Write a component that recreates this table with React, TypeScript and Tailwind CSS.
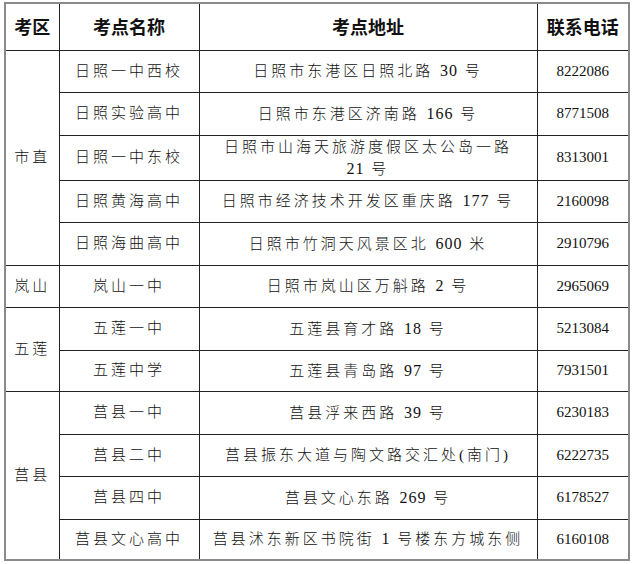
type Row = {
  area?: { name: string; span: number };
  school: string;
  address: string[];
  phone: string;
};

const rows: Row[] = [
  { area: { name: "市直", span: 5 }, school: "日照一中西校", address: ["日照市东港区日照北路 30 号"], phone: "8222086" },
  { school: "日照实验高中", address: ["日照市东港区济南路 166 号"], phone: "8771508" },
  { school: "日照一中东校", address: ["日照市山海天旅游度假区太公岛一路", "21 号"], phone: "8313001" },
  { school: "日照黄海高中", address: ["日照市经济技术开发区重庆路 177 号"], phone: "2160098" },
  { school: "日照海曲高中", address: ["日照市竹洞天风景区北 600 米"], phone: "2910796" },
  { area: { name: "岚山", span: 1 }, school: "岚山一中", address: ["日照市岚山区万斛路 2 号"], phone: "2965069" },
  { area: { name: "五莲", span: 2 }, school: "五莲一中", address: ["五莲县育才路 18 号"], phone: "5213084" },
  { school: "五莲中学", address: ["五莲县青岛路 97 号"], phone: "7931501" },
  { area: { name: "莒县", span: 4 }, school: "莒县一中", address: ["莒县浮来西路 39 号"], phone: "6230183" },
  { school: "莒县二中", address: ["莒县振东大道与陶文路交汇处(南门)"], phone: "6222735" },
  { school: "莒县四中", address: ["莒县文心东路 269 号"], phone: "6178527" },
  { school: "莒县文心高中", address: ["莒县沭东新区书院街 1 号楼东方城东侧"], phone: "6160108" },
];

// row heights read off the screenshot
const heights = [
  "h-[42px]",
  "h-[43px]",
  "h-[44px]",
  "h-[42px]",
  "h-[43px]",
  "h-[42px]",
  "h-[43px]",
  "h-[41px]",
  "h-[43px]",
  "h-[42px]",
  "h-[43px]",
  "h-[41px]",
];

const cell = "border border-[#222] text-center align-middle p-0";
const body = "font-['Liberation_Serif','Noto_Sans_CJK_SC',serif] font-light text-[15px] tracking-[3px] text-[#111]";

// digits in the addresses sit closer together than the Chinese characters
function Line({ text }: { text: string }) {
  return (
    <>
      {text.split(/(\d+)/).map((part, i) =>
        /^\d+$/.test(part) ? (
          <span key={i} className="text-[16px] font-normal tracking-[1px]">
            {part}
          </span>
        ) : (
          <span key={i}>{part}</span>
        ),
      )}
    </>
  );
}

export default function App() {
  return (
    <div className="min-h-[564px] w-[633px] bg-white pl-[4px] pt-[2px]">
      <table className="w-[624px] table-fixed border-collapse border-2 border-[#8a8a8a]">
        <colgroup>
          <col className="w-[54px]" />
          <col className="w-[140px]" />
          <col className="w-[338px]" />
          <col className="w-[92px]" />
        </colgroup>
        <thead>
          <tr className="h-[47px] font-['Noto_Sans_CJK_SC',sans-serif] text-[18px] font-bold text-[#111]">
            <th className={cell}>考区</th>
            <th className={cell}>考点名称</th>
            <th className={cell}>考点地址</th>
            <th className={cell}>联系电话</th>
          </tr>
        </thead>
        <tbody>
          {rows.map((row, i) => (
            <tr key={row.school} className={heights[i]}>
              {row.area && (
                <td rowSpan={row.area.span} className={`${cell} ${body}`}>
                  {row.area.name}
                </td>
              )}
              <td className={`${cell} ${body}`}>{row.school}</td>
              <td className={`${cell} ${body} leading-[22px]`}>
                {row.address.map((line, j) => (
                  <div key={j}>
                    <Line text={line} />
                  </div>
                ))}
              </td>
              <td className={`${cell} font-['Liberation_Serif',serif] text-[15px] text-[#111]`}>{row.phone}</td>
            </tr>
          ))}
        </tbody>
      </table>
    </div>
  );
}
